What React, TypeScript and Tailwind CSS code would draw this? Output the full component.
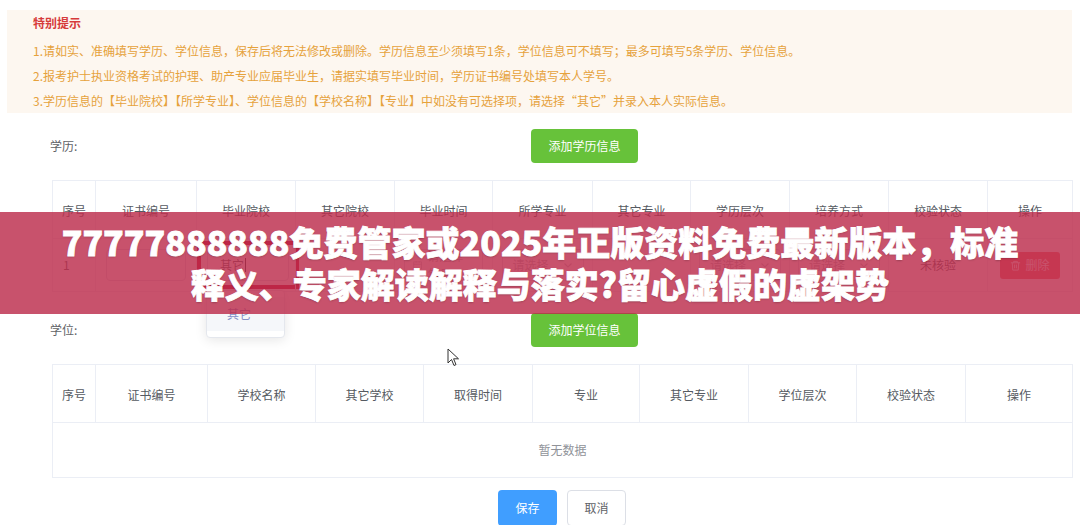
import React from "react";

const F = "font-['Microsoft_YaHei','Noto_Sans_CJK_SC','Noto_Sans',sans-serif]";

const t1Cols = [43, 101, 99, 99, 98, 100, 98, 99, 99, 99, 85];
const t1Heads = ["序号", "证书编号", "毕业院校", "其它院校", "毕业时间", "所学专业", "其它专业", "学历层次", "培养方式", "校验状态", "操作"];
const t2Cols = [43, 112, 108, 108, 109, 107, 109, 108, 109, 107];
const t2Heads = ["序号", "证书编号", "学校名称", "其它学校", "取得时间", "专业", "其它专业", "学位层次", "校验状态", "操作"];

function Chevron() {
  return (
    <svg width="10" height="10" viewBox="0 0 10 10" className="shrink-0">
      <path d="M1.5 3.5 L5 7 L8.5 3.5" fill="none" stroke="#c0c4cc" strokeWidth="1.2" />
    </svg>
  );
}

function SelectBox({ text, placeholder }: { text: string; placeholder?: boolean }) {
  return (
    <div className="mx-auto flex h-[32px] w-[82px] items-center justify-between rounded-[4px] border border-[#dcdfe6] bg-white px-[10px]">
      <span className={placeholder ? "text-[#b4b7bd]" : "text-[#606266]"}>{text}</span>
      {placeholder && <Chevron />}
    </div>
  );
}

function Notice() {
  const lines = [
    "1.请如实、准确填写学历、学位信息，保存后将无法修改或删除。学历信息至少须填写1条，学位信息可不填写；最多可填写5条学历、学位信息。",
    "2.报考护士执业资格考试的护理、助产专业应届毕业生，请据实填写毕业时间，学历证书编号处填写本人学号。",
    "3.学历信息的【毕业院校】【所学专业】、学位信息的【学校名称】【专业】中如没有可选择项，请选择\u201c其它\u201d并录入本人实际信息。",
  ];
  return (
    <div className="mx-[7px] mt-[10px] h-[103px] w-[1065px] bg-[#fdf7f0] pl-[26px] pt-[3px]">
      <div className="h-[20px] text-[12px] leading-[20px] font-bold text-[#d63a3a]">特别提示</div>
      <div className="mt-[5px] flex flex-col">
        {lines.map((l) => (
          <div key={l} className="h-[25px] text-[12px] leading-[25px] text-[#e6a23c]">
            {l}
          </div>
        ))}
      </div>
    </div>
  );
}

function LabelRow({ label, btn }: { label: string; btn: string }) {
  return (
    <div className="flex h-[34px] items-center">
      <div className="w-[531px] pl-[50px] text-[12px] text-[#606266]">{label}</div>
      <div className="flex h-[34px] w-[107px] items-center justify-center rounded-[4px] bg-[#67c23a] text-[12px] text-white">
        {btn}
      </div>
    </div>
  );
}

function Table({ cols, heads, children }: { cols: number[]; heads: string[]; children: React.ReactNode }) {
  return (
    <table className="ml-[52px] w-[1020px] table-fixed border-collapse text-[12px]">
      <colgroup>
        {cols.map((w, i) => (
          <col key={i} style={{ width: w }} />
        ))}
      </colgroup>
      <thead>
        <tr className="h-[58px]">
          {heads.map((h) => (
            <th key={h} className="border border-[#ebeef5] pt-[3px] font-normal text-[#555a61]">
              {h}
            </th>
          ))}
        </tr>
      </thead>
      <tbody>{children}</tbody>
    </table>
  );
}

export default function App() {
  return (
    <div className={`relative h-[525px] w-[1080px] overflow-hidden bg-white ${F}`}>
      <Notice />

      <div className="mt-[16px]">
        <LabelRow label="学历:" btn="添加学历信息" />
      </div>

      <div className="mt-[17px]">
        <Table cols={t1Cols} heads={t1Heads}>
          <tr className="h-[53px] text-[#606266]">
            <td className="border border-[#ebeef5] pl-[10px]">1</td>
            <td className="border border-[#ebeef5] px-[10px]">
              <div className="h-[32px] w-full rounded-[4px] border border-[#dcdfe6]" />
            </td>
            <td className="border border-[#ebeef5] p-0">
              <div className="mx-auto flex h-[48px] w-[102px] items-center justify-center border-[4px] border-[#c8102e]">
                <div className="flex h-[32px] w-[82px] items-center rounded-[4px] border border-[#dcdfe6] px-[12px]">
                  其它<span className="ml-[1px] inline-block h-[14px] w-[1px] bg-[#333]" />
                </div>
              </div>
            </td>
            <td className="border border-[#ebeef5]" />
            <td className="border border-[#ebeef5] px-[9px]">
              <div className="flex h-[32px] items-center gap-[5px] rounded-[4px] border border-[#dcdfe6] px-[8px] text-[#b4b7bd]">
                <svg width="12" height="12" viewBox="0 0 12 12">
                  <rect x="1" y="2" width="10" height="9" fill="none" stroke="#c0c4cc" />
                  <path d="M1 5 H11 M4 1 V3 M8 1 V3" stroke="#c0c4cc" />
                </svg>
                请选择年月
              </div>
            </td>
            <td className="border border-[#ebeef5]">
              <SelectBox text="请选择" placeholder />
            </td>
            <td className="border border-[#ebeef5]" />
            <td className="border border-[#ebeef5]">
              <SelectBox text="请选择" placeholder />
            </td>
            <td className="border border-[#ebeef5]">
              <SelectBox text="请选择" placeholder />
            </td>
            <td className="border border-[#ebeef5] text-center">未核验</td>
            <td className="border border-[#ebeef5] pl-[12px]">
              <div className="flex h-[27px] w-[60px] items-center justify-center gap-[4px] rounded-[3px] bg-[#f56c6c] text-[12px] text-white">
                <svg width="11" height="11" viewBox="0 0 12 12">
                  <path d="M1 3 H11 M4 3 V1.5 H8 V3 M2.5 3 L3 11 H9 L9.5 3 M5 5 V9 M7 5 V9" fill="none" stroke="white" strokeWidth="1" />
                </svg>
                删除
              </div>
            </td>
          </tr>
        </Table>
      </div>

      <div className="mt-[21px]">
        <LabelRow label="学位:" btn="添加学位信息" />
      </div>

      <div className="mt-[17px]">
        <Table cols={t2Cols} heads={t2Heads}>
          <tr className="h-[55px]">
            <td colSpan={10} className="border border-[#ebeef5] text-center text-[#909399]">
              暂无数据
            </td>
          </tr>
        </Table>
      </div>

      <div className="mt-[12px] flex gap-[10px] pl-[498px]">
        <div className="flex h-[36px] w-[59px] items-center justify-center rounded-[4px] bg-[#409eff] text-[12px] text-white">保存</div>
        <div className="flex h-[36px] w-[59px] items-center justify-center rounded-[4px] border border-[#dcdfe6] bg-white text-[12px] text-[#606266]">取消</div>
      </div>

      {/* dropdown popup */}
      <div className="absolute left-[206px] top-[290px] w-[79px] rounded-[4px] border border-[#e4e7ed] bg-white py-[6px] shadow-[0_2px_12px_rgba(0,0,0,0.1)]">
        <div className="flex h-[34px] items-center bg-[#f5f7fa] pl-[20px] text-[12px] text-[#8590c8]">其它</div>
      </div>

      {/* mouse cursor */}
      <svg className="absolute left-[447px] top-[348px]" width="13" height="19" viewBox="0 0 13 19">
        <path d="M1 1 L1 15 L4.5 11.5 L7 17.5 L9 16.6 L6.6 10.8 L11.5 10.8 Z" fill="white" stroke="#333" strokeWidth="1" strokeLinejoin="round" />
      </svg>

      {/* banner overlay */}
      <div className="absolute left-0 top-[212px] flex h-[102px] w-[1080px] flex-col items-center justify-center bg-[rgba(188,44,76,0.82)]">
        <div className="text-center text-[34px] leading-[42px] font-black text-white [-webkit-text-stroke:0.8px_white] [text-shadow:0_1px_2px_rgba(0,0,0,0.25)]">
          77777888888免费管家或2025年正版资料免费最新版本，标准
          <br />
          释义、专家解读解释与落实?留心虚假的虚架势
        </div>
      </div>
    </div>
  );
}
